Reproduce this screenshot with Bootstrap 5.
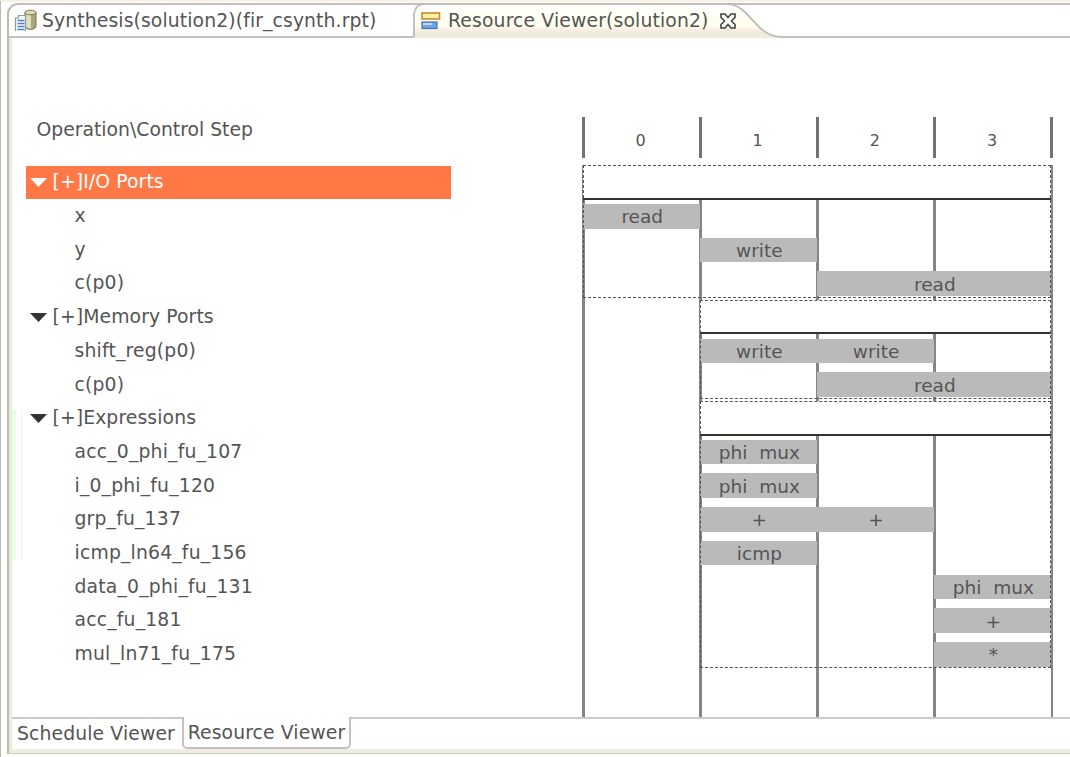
<!DOCTYPE html>
<html lang="en">
<head>
<meta charset="utf-8">
<title>Resource Viewer</title>
<link href="https://cdn.jsdelivr.net/npm/bootstrap@5.3.0/dist/css/bootstrap.min.css" rel="stylesheet">
<style>
:root { --col: 117.15px; --rowh: 33.69px; }
body { font-family: "DejaVu Sans", sans-serif; font-size: 18.8px; line-height: 1; color: #555; background: #fff; height: 757px; overflow: hidden; }
.app { height: 757px; border-top: 2px solid #f6f3e6; border-left: 1px solid #b9bcac; padding: 1px 0 3px 6px; }
.editor { border: 2px solid #bdbcae; border-right: 0; border-top-color: #c3bdbd; border-top-left-radius: 11px; border-bottom-color: #c9cbb8; height: 751px; }
.tabs { height: 33px; border-bottom: 2px solid #c6bfbf; }
.tab-one { width: 404px; padding-left: 5px; }
.tab-two { width: 370px; padding-left: 8px; }
.tab-two > .shape { position: absolute; left: 0; top: -2px; }
.tab-two > :not(.shape) { position: relative; }
.tab-label { letter-spacing: .11px; padding-top: 2px; }
.tab-two .tab-label { letter-spacing: .14px; margin-left: 7px; margin-right: 10px; }
.inner { border-left: 3px solid #ebebdc; border-bottom: 4px solid #efeddf; }
.content-area { height: 679px; }
.tree { width: 569.5px; padding-top: 80px; }
.tree-title { height: 47.5px; padding: 3px 0 0 24.5px; }
.tree-row { height: var(--rowh); padding-left: 62.5px; padding-top: 1px; letter-spacing: .18px; }
.tree-row.parent { margin-left: 14px; width: 425px; padding-left: 4px; letter-spacing: .1px; }
.tree-row.active { background: #ff7846; color: #fff; height: 33.4px; margin-bottom: .29px; }
.tree-row svg { margin-right: 5.5px; }
.ghost { position: absolute; left: 0; top: 372px; width: 10px; height: 150px; border-left: 4px solid #eaffe2; border-right: 1px solid #fdeeee; }
.chart { width: 472px; padding-top: 79px; }
.steps { height: 41px; margin-bottom: 7px; font-size: 16px; }
.steps > div { width: var(--col); border-left: 3px solid #737373; padding: 7px 2px 0 0; }
.steps > div:last-child { width: 3px; padding: 0; }
.lanes { flex: 1; background: repeating-linear-gradient(90deg, #858585 0 2.6px, transparent 2.6px var(--col)); }
.group { position: relative; width: calc(var(--col) * 4 - .5px); margin-left: 1px; }
.group.late { width: calc(var(--col) * 3 - .5px); margin-left: calc(var(--col) + 1px); }
.group::after { content: ""; position: absolute; inset: 0 0 2px 0; border: 1.5px dashed #555; }
.group-head { height: calc(var(--rowh) + 1px); margin-bottom: -1px; background: #fff; border-bottom: 2px solid #33332a; }
.lane { height: var(--rowh); display: grid; grid-template-columns: repeat(4, 1fr); padding-top: 5.3px; }
.late .lane { grid-template-columns: repeat(3, 1fr); }
.op { height: 24.6px; background: #bababa; text-align: center; font-size: 18.5px; padding: 4.3px 0 0 2px; margin: 0 0 0 .5px; white-space: pre; }
.at2 { grid-column-start: 2; } .at3 { grid-column-start: 3; }
.wide3 { grid-column: 3 / span 2; } .wide2 { grid-column: 2 / span 2; }
.bottom-tabs { height: 32px; letter-spacing: .12px; }
.bottom-tabs > div { border-top: 2px solid #cdcaca; }
.bottom-tabs > .current { border: 2px solid #c6c0c0; border-top: 0; border-radius: 0 0 5px 5px; width: 169px; padding-top: 2px; }
</style>
</head>
<body>
<div class="app">
<div class="editor d-flex flex-column">
<div class="tabs d-flex flex-shrink-0">
<div class="tab-one d-flex align-items-center"><svg width="24" height="24" viewBox="0 0 24 24"><path d="M11 3v15q6 5 11 0V3z" fill="#a9a779" stroke="#77764e"/><path d="M12 4h5v16l-5-2z" fill="#deddbc"/><ellipse cx="16.5" cy="3.5" rx="5.5" ry="2.3" fill="#ded9b5" stroke="#77764e"/><path d="M1.5 22V9h3V6.500h7V22" fill="#f4f8fc" stroke="#8c98a2" stroke-width="1.200"/><path d="M3.500 11.500h7M3.500 14.500h7M3.500 17.500h7M3.500 20.500h7" stroke="#4b83bd" stroke-width="1.500"/></svg><span class="tab-label ms-1">Synthesis(solution2)(fir_csynth.rpt)</span></div>
<div class="tab-two position-relative d-flex align-items-center"><svg class="shape" width="372" height="35"><defs><linearGradient id="tabfill" x2="0" y2="1"><stop offset="0" stop-color="#fff"/><stop offset=".35" stop-color="#fffff4"/><stop offset=".68" stop-color="#fffdec"/><stop offset=".72" stop-color="#ffefea"/><stop offset=".85" stop-color="#ededda"/><stop offset="1" stop-color="#ededdd"/></linearGradient></defs><path d="M1 35V12Q2 1 11 1H314C338 2 340 32 368 34V35z" fill="url(#tabfill)"/><path d="M1 34V12Q2 1 11 1H314C338 2 340 32 368 34" fill="none" stroke="#bdb8b0" stroke-width="1.700"/></svg><svg width="20" height="18" viewBox="0 0 20 18"><rect x="1" y="1" width="17.500" height="6" fill="#fff0a6" stroke="#c88b32" stroke-width="1.600"/><rect x="1" y="10" width="15" height="6.500" fill="#70a5e0" stroke="#4772ae" stroke-width="1.200"/><path d="M2 11h9v2H2z" fill="#b9dcf4"/></svg><span class="tab-label">Resource Viewer(solution2)</span><svg width="18" height="18" viewBox="0 0 18 18"><path d="M2 2h4l3 3.500L12 2h4v3.500L12.500 9l3.500 3.500V16h-4l-3-3.500L6 16H2v-3.500L5.500 9 2 5.500z" fill="#fff" stroke="#444" stroke-width="1.600"/></svg></div>
</div>
<div class="inner flex-grow-1">
<div class="content-area d-flex position-relative">
<div class="ghost"></div>
<div class="tree">
<div class="tree-title">Operation\Control Step</div>
<div class="tree-row parent active d-flex align-items-center"><svg width="17" height="10"><path d="M0 0h17L8.500 9z" fill="#fff"/></svg>[+]I/O Ports</div>
<div class="tree-row d-flex align-items-center">x</div>
<div class="tree-row d-flex align-items-center">y</div>
<div class="tree-row d-flex align-items-center">c(p0)</div>
<div class="tree-row parent d-flex align-items-center"><svg width="17" height="10"><path d="M0 0h17L8.500 9z" fill="#333"/></svg>[+]Memory Ports</div>
<div class="tree-row d-flex align-items-center">shift_reg(p0)</div>
<div class="tree-row d-flex align-items-center">c(p0)</div>
<div class="tree-row parent d-flex align-items-center"><svg width="17" height="10"><path d="M0 0h17L8.500 9z" fill="#333"/></svg>[+]Expressions</div>
<div class="tree-row d-flex align-items-center">acc_0_phi_fu_107</div>
<div class="tree-row d-flex align-items-center">i_0_phi_fu_120</div>
<div class="tree-row d-flex align-items-center">grp_fu_137</div>
<div class="tree-row d-flex align-items-center">icmp_ln64_fu_156</div>
<div class="tree-row d-flex align-items-center">data_0_phi_fu_131</div>
<div class="tree-row d-flex align-items-center">acc_fu_181</div>
<div class="tree-row d-flex align-items-center">mul_ln71_fu_175</div>
</div>
<div class="chart d-flex flex-column">
<div class="steps d-flex"><div class="d-flex align-items-center justify-content-center">0</div><div class="d-flex align-items-center justify-content-center">1</div><div class="d-flex align-items-center justify-content-center">2</div><div class="d-flex align-items-center justify-content-center">3</div><div></div></div>
<div class="lanes">
<div class="group">
<div class="group-head"></div>
<div class="lane"><div class="op">read</div></div>
<div class="lane"><div class="op at2">write</div></div>
<div class="lane"><div class="op wide3">read</div></div>
</div>
<div class="group late">
<div class="group-head"></div>
<div class="lane"><div class="op">write</div><div class="op ms-0">write</div></div>
<div class="lane"><div class="op wide2">read</div></div>
</div>
<div class="group late">
<div class="group-head"></div>
<div class="lane"><div class="op">phi  mux</div></div>
<div class="lane"><div class="op">phi  mux</div></div>
<div class="lane"><div class="op">+</div><div class="op ms-0">+</div></div>
<div class="lane"><div class="op">icmp</div></div>
<div class="lane"><div class="op at3">phi  mux</div></div>
<div class="lane"><div class="op at3">+</div></div>
<div class="lane"><div class="op at3">*</div></div>
</div>
</div>
</div>
</div>
<div class="bottom-tabs d-flex">
<div class="d-flex align-items-center" style="width:170px;padding-left:5px">Schedule Viewer</div>
<div class="current d-flex align-items-center justify-content-center">Resource Viewer</div>
<div class="flex-grow-1"></div>
</div>
</div>
</div>
</div>
<script src="https://cdn.jsdelivr.net/npm/bootstrap@5.3.0/dist/js/bootstrap.bundle.min.js"></script>
</body>
</html>
